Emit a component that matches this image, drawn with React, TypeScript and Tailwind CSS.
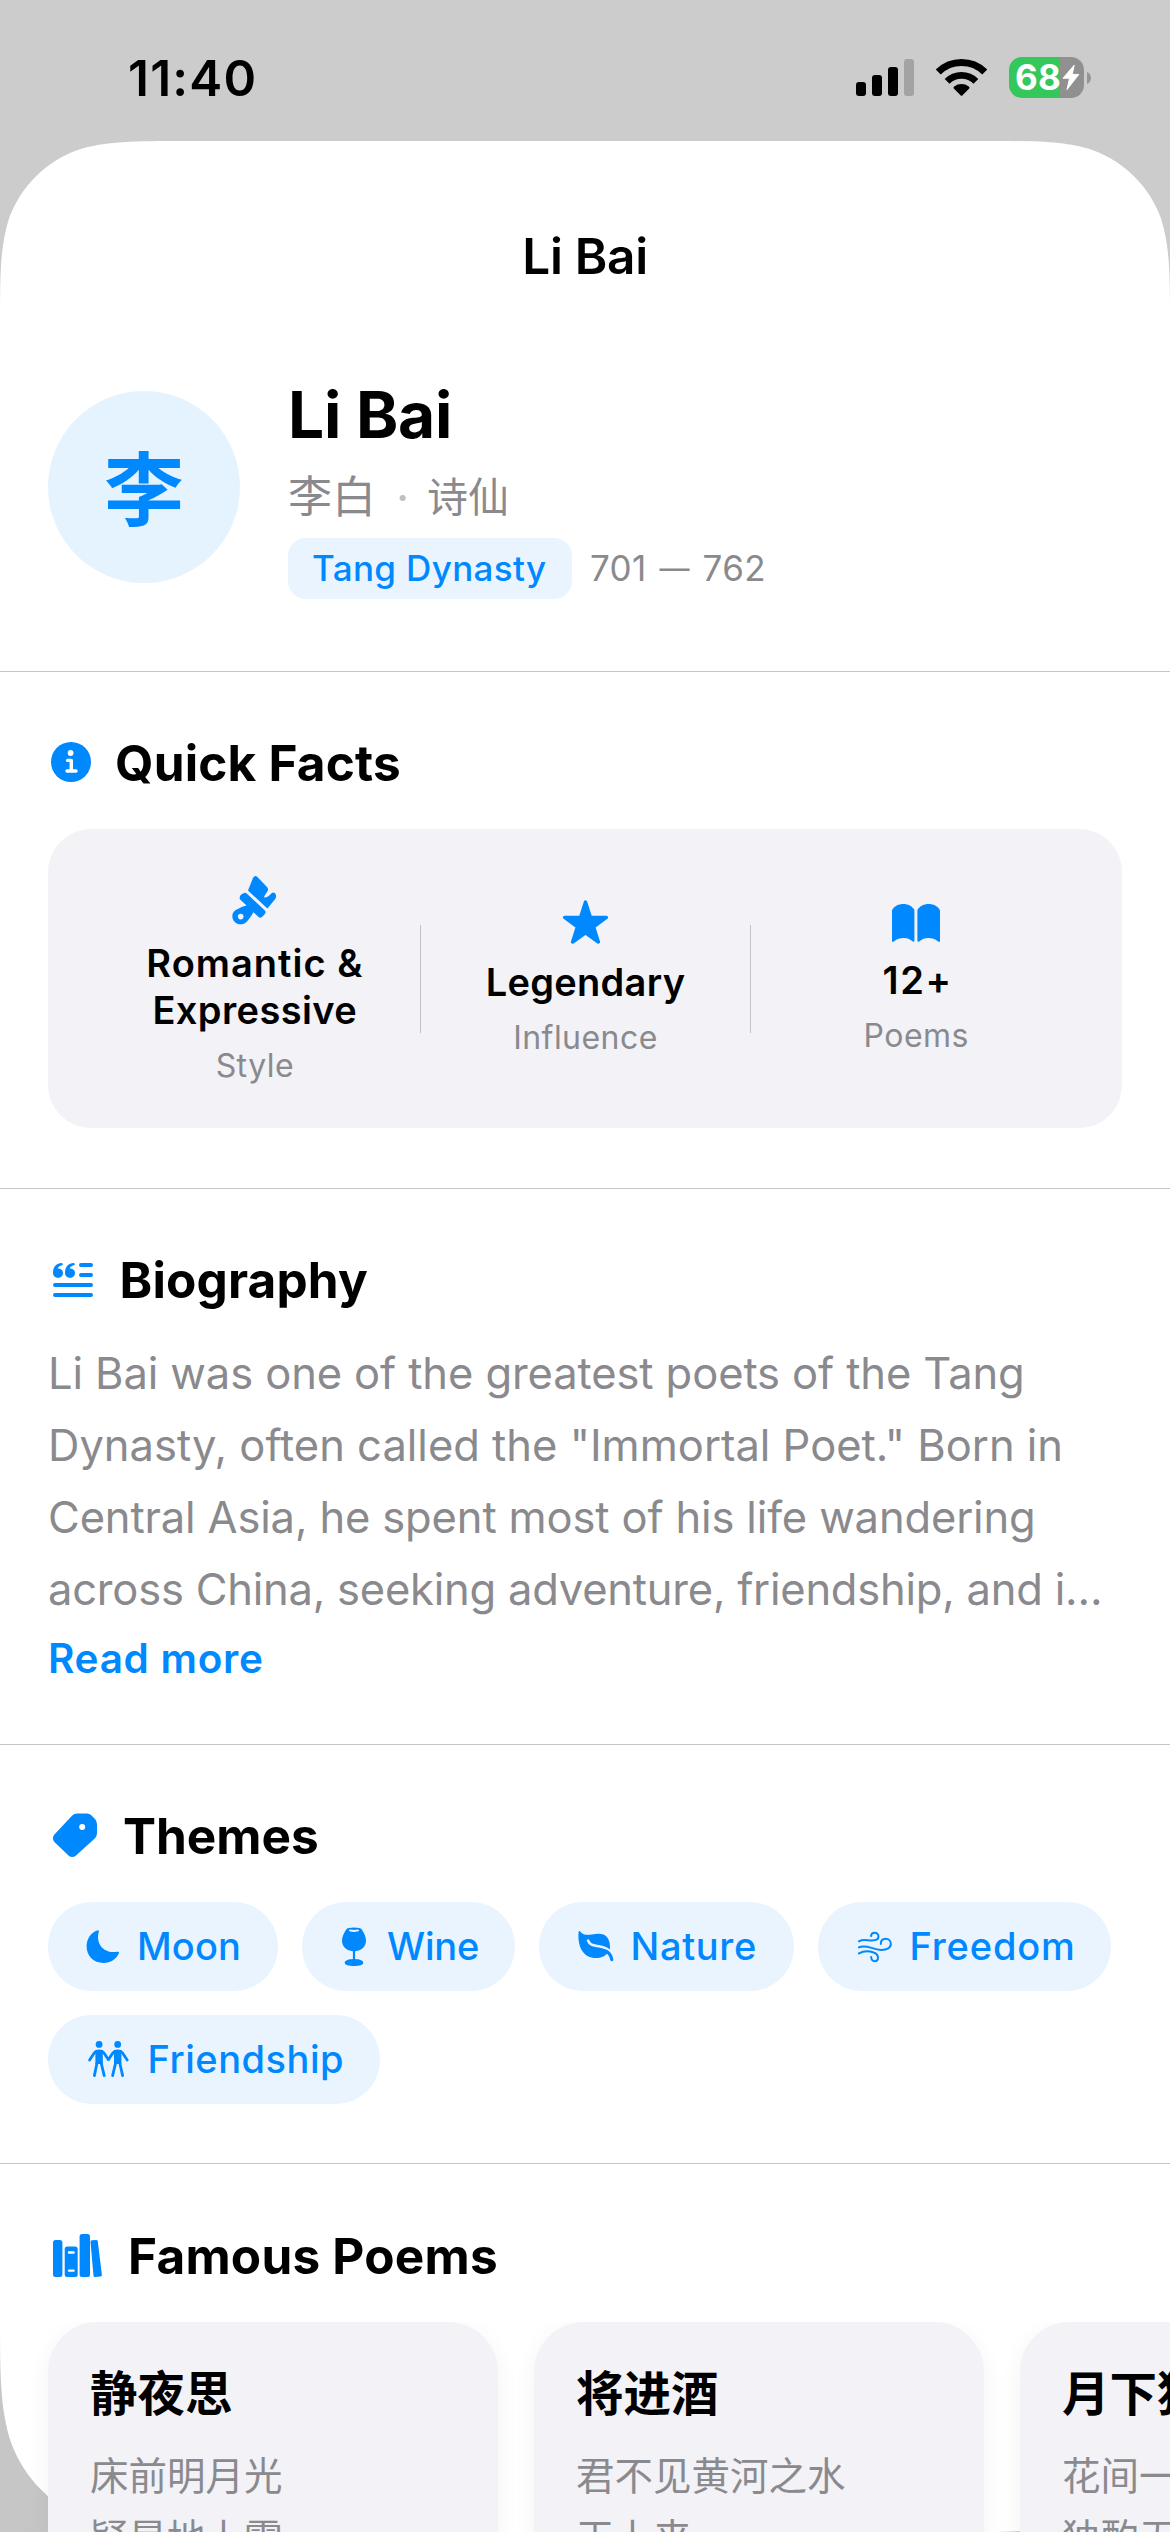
import type { ReactNode } from 'react';

const SHEET_WIDTH = 1170;
const SHEET_HEIGHT = 2391;

/** Outline of a rectangle whose corners use a continuous (smoothed) curve. */
function smoothRect(w: number, h: number, top: number, bottom: number): string {
  const t = (k: number) => (k * top).toFixed(2);
  const tx = (k: number) => (w - k * top).toFixed(2);
  const b = (k: number) => (k * bottom).toFixed(2);
  const bx = (k: number) => (w - k * bottom).toFixed(2);
  const by = (k: number) => (h - k * bottom).toFixed(2);
  return [
    `M${t(1.5287)} 0`,
    `L${tx(1.5287)} 0`,
    `C${tx(1.0885)} 0 ${tx(0.8684)} 0 ${tx(0.6315)} ${t(0.0749)}`,
    `C${tx(0.3728)} ${t(0.1691)} ${tx(0.1691)} ${t(0.3728)} ${tx(0.0749)} ${t(0.6315)}`,
    `C${w} ${t(0.8684)} ${w} ${t(1.0885)} ${w} ${t(1.5287)}`,
    `L${w} ${by(1.5287)}`,
    `C${w} ${by(1.0885)} ${w} ${by(0.8684)} ${bx(0.0749)} ${by(0.6315)}`,
    `C${bx(0.1691)} ${by(0.3728)} ${bx(0.3728)} ${by(0.1691)} ${bx(0.6315)} ${by(0.0749)}`,
    `C${bx(0.8684)} ${h} ${bx(1.0885)} ${h} ${bx(1.5287)} ${h}`,
    `L${b(1.5287)} ${h}`,
    `C${b(1.0885)} ${h} ${b(0.8684)} ${h} ${b(0.6315)} ${by(0.0749)}`,
    `C${b(0.3728)} ${by(0.1691)} ${b(0.1691)} ${by(0.3728)} ${b(0.0749)} ${by(0.6315)}`,
    `C0 ${by(0.8684)} 0 ${by(1.0885)} 0 ${by(1.5287)}`,
    `L0 ${t(1.5287)}`,
    `C0 ${t(1.0885)} 0 ${t(0.8684)} ${t(0.0749)} ${t(0.6315)}`,
    `C${t(0.1691)} ${t(0.3728)} ${t(0.3728)} ${t(0.1691)} ${t(0.6315)} ${t(0.0749)}`,
    `C${t(0.8684)} 0 ${t(1.0885)} 0 ${t(1.5287)} 0Z`,
  ].join('');
}

function StatusBar() {
  return (
    <div className="flex h-[141px] items-start justify-between pl-[128px] pr-[79px]">
      <span className="mt-[48px] text-[49.5px] leading-[60px] font-semibold tracking-[1.2px]">11:40</span>
      <div className="flex items-start">
        <svg className="mt-[59px] mr-[22px]" width="58" height="37" viewBox="0 0 58 37">
          <rect x="0" y="23" width="10" height="14" rx="3" />
          <rect x="16" y="16" width="10" height="21" rx="3" />
          <rect x="32" y="8" width="10" height="29" rx="3" />
          <rect x="48" y="0" width="10" height="37" rx="3" fill="#a3a3a3" />
        </svg>
        <svg className="mt-[59px] mr-[22px]" width="51" height="37" viewBox="0 0 51 37">
          <g fill="none" stroke="#000">
            <path d="M2.3 13A33.2 33.2 0 0 1 48.7 13" strokeWidth="7" />
            <path d="M11.1 22.3A20.4 20.4 0 0 1 39.9 22.3" strokeWidth="6.8" />
          </g>
          <path d="M26.5 36.2Q25.5 37.2 24.5 36.2L18 29.8Q17 28.6 18.2 27.6A12 12 0 0 1 32.8 27.6Q34 28.6 33 29.8Z" />
        </svg>
        <div className="mt-[57px] flex h-[41px] w-[75px] items-center overflow-hidden rounded-[13px] bg-[linear-gradient(90deg,#34c759_51px,#909090_51px)] pl-[6px] text-white">
          <span className="text-[35px] leading-[41px] font-bold tracking-[0.2px]">68</span>
          <svg className="ml-[1px] shrink-0" width="18" height="27" viewBox="0 0 18 27">
            <path d="M12.2 1.2L1 14.2H7.6L5 25.6L16.8 10.4H10.2Z" fill="#fff" stroke="#fff" strokeWidth="1" strokeLinejoin="round" />
          </svg>
        </div>
        <svg className="mt-[72px] ml-[3px]" width="4" height="12" viewBox="0 0 4 12">
          <path d="M0 0C5.3 2 5.3 10 0 12Z" fill="#959595" />
        </svg>
      </div>
    </div>
  );
}

function Profile() {
  return (
    <div className="flex border-b border-[#c6c6c8] pt-[91px] pb-[72px] pl-[48px]">
      <div className="mt-[14px] flex size-[192px] items-start justify-center rounded-full bg-[#e5f3ff]">
        <span className="font-['Noto_Sans_CJK_SC',sans-serif] text-[80px] leading-[186px] font-bold text-[#0088ff]">李</span>
      </div>
      <div className="ml-[48px] flex flex-col">
        <h1 className="text-[64px] leading-[76px] font-bold tracking-[-0.24px]">Li Bai</h1>
        <div className="mt-[15px] mb-[18px] flex h-[52px] font-['Noto_Sans_CJK_SC',sans-serif] leading-[52px] text-[#8a8a8e]">
          <span className="w-[101px] text-[44px]">李白</span>
          <span className="w-[27px] text-center font-[Inter] text-[42px] leading-[60px] font-medium text-[#bfbfc2]">·</span>
          <span className="ml-[11px] text-[41px]">诗仙</span>
        </div>
        <div className="flex items-center text-[35px] leading-[61px]">
          <span className="h-[61px] w-[284px] rounded-[18px] bg-[#e9f4fe] pl-[24px] font-medium tracking-[0.36px] whitespace-nowrap text-[#0088ff]">
            Tang Dynasty
          </span>
          <span className="ml-[18px] flex tracking-[0.35px] whitespace-pre text-[#8a8a8e]">
            <span>701 </span>
            <span className="mx-[2.6px] text-[30px]">—</span>
            <span> 762</span>
          </span>
        </div>
      </div>
    </div>
  );
}

function Heading({ icon, title, spacing }: { icon: ReactNode; title: string; spacing: string }) {
  return (
    <div className="flex h-[60px] pl-[48px]">
      {icon}
      <h2 className={`ml-[24px] text-[49.5px] leading-[60px] font-bold ${spacing}`}>{title}</h2>
    </div>
  );
}

const InfoIcon = () => (
  <svg className="shrink-0" width="43" height="60" viewBox="0 0 43 60">
    <circle cx="23" cy="29" r="20" fill="#0088ff" />
    <circle cx="22.6" cy="20" r="2.9" fill="#fff" />
    <path d="M19.6 27.4H23.3V37.8M19 38H28" fill="none" stroke="#fff" strokeWidth="3.4" strokeLinecap="round" strokeLinejoin="round" />
  </svg>
);

const QuoteIcon = () => (
  <svg className="shrink-0" width="47.5" height="60" viewBox="0 0 47.5 60">
    <g stroke="#0088ff" strokeWidth="4" strokeLinecap="round">
      <path d="M33 15H43M33 25H43M7 35H43M7 45H43" />
    </g>
    <g fill="#0088ff">
      <path id="mark" d="M5 22.8C5 17 8.3 13.3 13.6 13.1Q15.8 13.6 14.4 15.1C11.6 16 10.2 17 9.6 18.6C12.6 18.4 15 20.2 15 23C15 25.8 12.8 27.8 10 27.8C6.8 27.8 5 25.6 5 22.8Z" />
      <use href="#mark" x="12" />
    </g>
  </svg>
);

const TagIcon = () => (
  <svg className="shrink-0" width="51" height="60" viewBox="0 0 51 60">
    <path
      d="M29 7.5H39Q41.5 7.5 43.5 9.5L47 13Q49 15.2 49 18V27Q49 30 47 32.2L28 49.6Q24.3 52.6 20.5 49.6L6.4 36Q3.4 32.3 6.4 28.6L24 9.8Q26.2 7.5 29 7.5Z"
      fill="#0088ff"
    />
    <circle cx="34.2" cy="21" r="3" fill="#fff" />
  </svg>
);

const BooksIcon = () => (
  <svg className="shrink-0" width="56" height="60" viewBox="0 0 56 60">
    <g fill="#0088ff">
      <rect x="5" y="14" width="9.4" height="37" rx="2.5" />
      <rect x="16.7" y="20.5" width="13" height="30.5" rx="2.5" />
      <rect x="31.6" y="8" width="10.4" height="43" rx="2.5" />
      <path d="M44 15.8L48.3 15.4L52.4 49L47 49.6Z" stroke="#0088ff" strokeWidth="3" strokeLinejoin="round" />
    </g>
    <path d="M21 26.5H25.6M21 44.6H25.6" stroke="#fff" strokeWidth="2.4" strokeLinecap="round" />
  </svg>
);

const BrushIcon = () => (
  <svg className="mt-[3px]" width="45" height="51" viewBox="0 0 45 51">
    <g fill="#0088ff">
      <path d="M21.2 2.6Q23 -0.4 25.4 2L35.2 12.2Q36.6 14 35.6 16C34 19 31.8 21 32.2 22.6C35 22.8 37.6 20.4 39.6 18.2Q41.6 16.4 43.2 18.6Q45 21.4 43.2 24L35.4 33.4L16 15.6Z" />
      <path d="M9.2 19.6L11.6 18.2Q13.4 17.2 15 18.8L32.6 35.2Q34.4 37 33 38.8L30.6 41.6Q28.6 43.6 26.6 42L21.4 37.2C19.8 40 17.6 43.4 15.2 46.2C12.6 49.6 7 50.6 3.2 47.4C-0.6 44 -0.6 38.4 3 35.6C6.4 33 11 31.4 14.6 30.4L8.6 25Q6.4 22.4 9.2 19.6Z" />
    </g>
    <circle cx="8.7" cy="41.6" r="2.8" fill="#f2f2f7" />
  </svg>
);

const StarIcon = () => (
  <svg width="47" height="46" viewBox="0 0 47 46">
    <path
      d="M23.5 3L28.4 18.2L44.4 18.4L31.6 27.8L36.4 43L23.5 33.8L10.6 43L15.4 27.8L2.6 18.4L18.6 18.2Z"
      fill="#0088ff"
      stroke="#0088ff"
      strokeWidth="3.4"
      strokeLinejoin="round"
    />
  </svg>
);

const BookIcon = () => (
  <svg className="mt-[2px]" width="48" height="39" viewBox="0 0 48 39">
    <g fill="#0088ff">
      <path d="M0 6.4C2 2 6.8 0 11.4 0C16 0 20.2 2 22.4 6V36.6Q22.4 38.4 20.8 37.4C18 35.2 15.2 34 11.6 34C8 34 5 35 2 37.4Q0 38.6 0 36.8Z" />
      <path d="M25.4 6C27.8 2 32 0 36.6 0C41.2 0 46 2 48 6.4V36.8Q48 38.6 46 37.4C43 35 40 34 36.4 34C32.8 34 30 35.2 27.2 37.4Q25.4 38.4 25.4 36.6Z" />
    </g>
  </svg>
);

function Fact({ icon, slot, lines, label }: { icon: ReactNode; slot: string; lines: ReactNode; label: string }) {
  return (
    <div className="flex flex-1 flex-col items-center text-center">
      <div className={slot}>{icon}</div>
      <div className="text-[38px] leading-[47px] font-semibold whitespace-nowrap">{lines}</div>
      <div className="mt-[12px] text-[32px] leading-[40px] tracking-[0.45px] text-[#8a8a8e]">{label}</div>
    </div>
  );
}

function QuickFacts() {
  return (
    <section className="border-b border-[#c6c6c8] pt-[61px] pb-[60px]">
      <Heading icon={<InfoIcon />} title="Quick Facts" spacing="tracking-[0.19px]" />
      <div className="mx-[48px] mt-[36px] flex h-[299px] items-center rounded-[43px] bg-[#f2f2f7] pr-[41px] pl-[42px]">
        <Fact
          icon={<BrushIcon />}
          slot="h-[68px]"
          label="Style"
          lines={
            <>
              <div className="tracking-[1px]">Romantic &amp;</div>
              <div className="tracking-[0.4px]">Expressive</div>
            </>
          }
        />
        <div className="h-[108px] w-px bg-[#c3c3c6]" />
        <Fact icon={<StarIcon />} slot="h-[60px]" label="Influence" lines={<div className="tracking-[0.3px]">Legendary</div>} />
        <div className="h-[108px] w-px bg-[#c3c3c6]" />
        <Fact icon={<BookIcon />} slot="h-[55px]" label="Poems" lines={<div className="pl-[3px] tracking-[1.6px]">12+</div>} />
      </div>
    </section>
  );
}

function Biography() {
  return (
    <section className="border-b border-[#c6c6c8] pt-[61px] pb-[60px]">
      <Heading icon={<QuoteIcon />} title="Biography" spacing="tracking-[0.16px]" />
      <p className="mt-[27px] pl-[48px] text-[43.5px] leading-[72px] whitespace-nowrap text-[#8a8a8e]">
        <span className="block tracking-[-0.1px]">Li Bai was one of the greatest poets of the Tang</span>
        <span className="block">Dynasty, often called the "Immortal Poet." Born in</span>
        <span className="block tracking-[-0.14px]">Central Asia, he spent most of his life wandering</span>
        <span className="block tracking-[-0.22px]">across China, seeking adventure, friendship, and i…</span>
      </p>
      <a className="mt-[9px] block pl-[48px] text-[40.5px] leading-[50px] font-semibold tracking-[0.7px] text-[#0088ff]">Read more</a>
    </section>
  );
}

const MoonIcon = () => (
  <svg className="shrink-0" width="53" height="89" viewBox="0 0 53 89">
    <path
      d="M12.5 28.7Q15.6 27.6 14.8 30C11.5 41 19 52 33 49.8Q36 49.2 34.8 51.6C32 57.5 26.5 61 19.5 61C9.5 61 2.6 53.8 2.6 44.6C2.6 37 6.5 31 12.5 28.7Z"
      fill="#0088ff"
    />
  </svg>
);

const WineIcon = () => (
  <svg className="shrink-0" width="49" height="89" viewBox="0 0 49 89">
    <path
      d="M8.4 27.2Q9.2 25.5 16 25.5Q22.8 25.5 23.6 27.2C26 30.5 28 35 28 38.6C28 45 23.4 48.8 17.1 49.2V57C22 57.2 25.3 58.6 25.3 60.8C25.3 63 21.5 64 16 64C10.5 64 6.7 63 6.7 60.8C6.7 58.6 10 57.2 14.9 57V49.2C8.6 48.8 4 45 4 38.6C4 35 6 30.5 8.4 27.2Z"
      fill="#0088ff"
    />
    <path d="M12 28.4Q16 29.4 20 28.4" fill="none" stroke="#e9f4fe" strokeWidth="2" strokeLinecap="round" />
  </svg>
);

const LeafIcon = () => (
  <svg className="shrink-0" width="55.6" height="89" viewBox="0 0 55.6 89">
    <path
      d="M3.6 30Q4.2 28 5.6 30C8 33 12 33.2 17 32.4C24 31.4 29.5 31.5 32.3 35.5C34.5 38.5 35.3 42.5 34.9 47.4C31.5 53 28 56 21 56C9 56 2.2 46 3.6 30Z"
      fill="#0088ff"
    />
    <path d="M13 38.6C15 43.6 19 43.4 24 44.3C29 45.2 33 47 36.5 50.5" fill="none" stroke="#e9f4fe" strokeWidth="2.6" strokeLinecap="round" />
    <path d="M29 48.6C34 49.6 36 53 36.8 57.6" fill="none" stroke="#0088ff" strokeWidth="3.2" strokeLinecap="round" />
  </svg>
);

const WindIcon = () => (
  <svg className="shrink-0" width="55.6" height="89" viewBox="0 0 55.6 89">
    <g fill="none" stroke="#0088ff" strokeWidth="2" strokeLinecap="round">
      <path d="M4.9 39.3C9 36.8 13 38.4 18 38.4C22 38.4 24.5 37 24.5 34.5C24.5 32.2 22.7 30.8 20.7 30.8C18.7 30.8 17.3 32 17 34" />
      <path d="M4.9 45.4C12 42 18 47.5 27 47.9C33 48 36.8 46 36.8 42C36.8 38.8 34.6 36.8 31.8 36.8C28.8 36.8 26.8 38.8 26.8 42" />
      <path d="M4.9 51.4C10 48.5 15 48.8 19 50.3C22.5 51.5 24 53.5 24 55.5C24 57.8 22.5 59.2 20.7 59.2C18.6 59.2 17.3 57.5 17.2 55" />
    </g>
  </svg>
);

const FriendsIcon = () => (
  <svg className="shrink-0" width="63.6" height="89" viewBox="0 0 63.6 89">
    <g fill="#0088ff">
      <circle cx="15.1" cy="29.4" r="3.4" />
      <circle cx="33.7" cy="29.4" r="3.4" />
      <path d="M11.4 35.4H18.8V49H11.4ZM30 35.4H37.4V49H30Z" />
    </g>
    <g fill="none" stroke="#0088ff" strokeWidth="2.8" strokeLinecap="round" strokeLinejoin="round">
      <path d="M5.6 45L10.4 37.8Q11.8 36 15.1 36Q18.4 36 19.8 37.8L24.4 44.6L29 37.8Q30.4 36 33.7 36Q37 36 38.4 37.8L43.2 45" />
      <path d="M13 48L10.4 60.6M17.2 48L20.2 60.6M31.6 48L28.6 60.6M35.8 48L38.6 60.6" />
    </g>
  </svg>
);

function Pill({ icon, label, size }: { icon: ReactNode; label: string; size: string }) {
  return (
    <div className={`flex h-[89px] rounded-[44px] bg-[#e9f4fe] pl-[36px] text-[38px] leading-[89px] font-medium whitespace-nowrap text-[#0088ff] ${size}`}>
      {icon}
      <span>{label}</span>
    </div>
  );
}

function Themes() {
  return (
    <section className="border-b border-[#c6c6c8] pt-[61px] pb-[59px]">
      <Heading icon={<TagIcon />} title="Themes" spacing="tracking-normal" />
      <div className="mt-[36px] flex flex-wrap gap-[24px] px-[48px]">
        <Pill icon={<MoonIcon />} label="Moon" size="w-[230px] tracking-[0.14px]" />
        <Pill icon={<WineIcon />} label="Wine" size="w-[213px] tracking-[-0.2px]" />
        <Pill icon={<LeafIcon />} label="Nature" size="w-[255px] tracking-[0.66px]" />
        <Pill icon={<WindIcon />} label="Freedom" size="w-[293px] tracking-[0.82px]" />
        <Pill icon={<FriendsIcon />} label="Friendship" size="w-[332px] tracking-[0.52px]" />
      </div>
    </section>
  );
}

const poems = [
  { title: '静夜思', lines: ['床前明月光', '疑是地上霜'] },
  { title: '将进酒', lines: ['君不见黄河之水', '天上来'] },
  { title: '月下独酌', lines: ['花间一壶酒', '独酌无相亲'] },
];

function FamousPoems() {
  return (
    <section className="pt-[62px]">
      <Heading icon={<BooksIcon />} title="Famous Poems" spacing="tracking-[0.23px]" />
      <div className="mt-[36px] flex gap-[36px] overflow-hidden pl-[48px] font-['Noto_Sans_CJK_SC',sans-serif]">
        {poems.map((poem) => (
          <article
            key={poem.title}
            className="h-[420px] w-[450px] shrink-0 rounded-[50px] bg-[#f2f2f7] px-[42px] pt-[39px] shadow-[0_6px_24px_rgba(0,0,0,0.05)]"
          >
            <h3 className="text-[47.5px] leading-[60px] font-bold">{poem.title}</h3>
            <div className="mt-[21px] text-[38.5px] leading-[62px] whitespace-nowrap text-[#8a8a8e]">
              {poem.lines.map((line) => (
                <p key={line}>{line}</p>
              ))}
            </div>
          </article>
        ))}
      </div>
    </section>
  );
}

export default function App() {
  return (
    <div className="relative h-[2532px] w-[1170px] overflow-hidden bg-[linear-gradient(#cccccc_50%,#c6c6c6_50%)] font-[Inter,'Noto_Sans_CJK_SC',sans-serif] text-black">
      <StatusBar />
      <main className="relative h-[2391px] overflow-hidden">
        <div
          className="absolute inset-0 bg-white"
          style={{ clipPath: `path('${smoothRect(SHEET_WIDTH, SHEET_HEIGHT, 122, 143)}')` }}
        />
        <div className="relative">
          <div className="pt-[85px] text-center text-[49.5px] leading-[60px] font-semibold tracking-[-0.3px]">Li Bai</div>
          <Profile />
          <QuickFacts />
          <Biography />
          <Themes />
          <FamousPoems />
        </div>
      </main>
    </div>
  );
}
